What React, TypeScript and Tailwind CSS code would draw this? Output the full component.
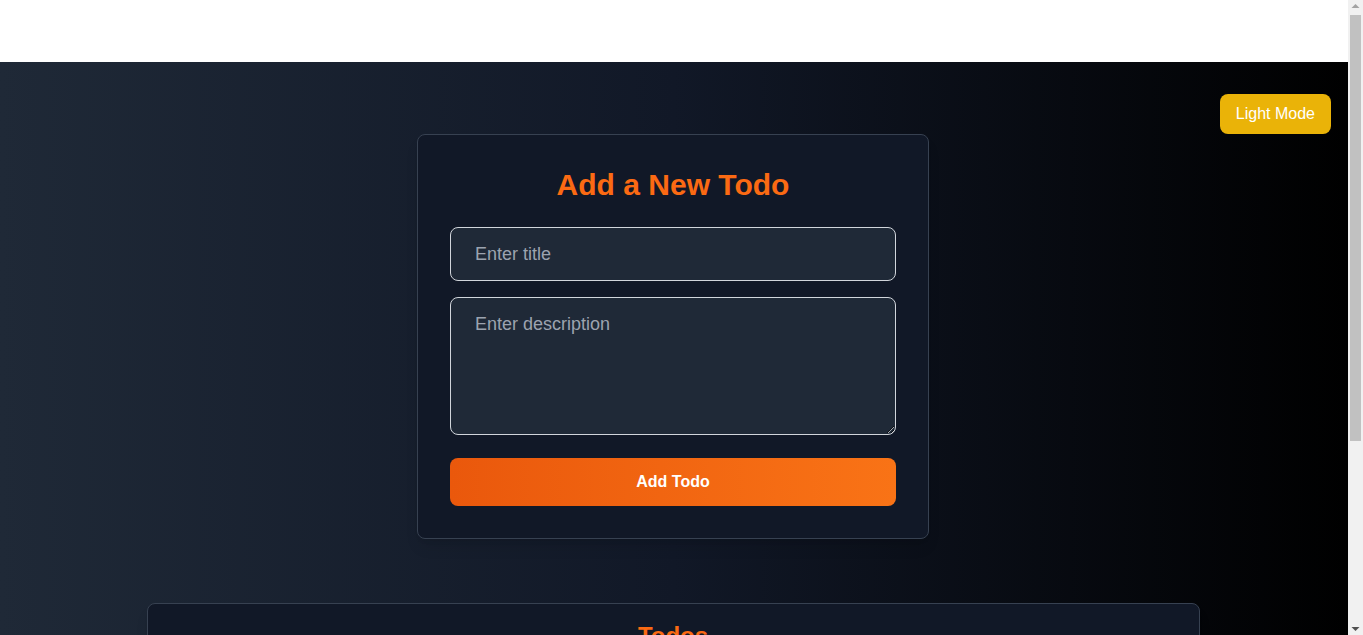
import { useState } from "react";

// fake browser scrollbar, the reference shows the page scrolled at top
const ScrollBar = () => (
    <div className="fixed top-0 right-0 flex h-screen w-[15px] flex-col items-center bg-[#f1f1f1]">
        <svg width="9" height="15" viewBox="0 0 9 15" className="shrink-0">
            <path d="M0.5 8 L4.5 4 L8.5 8 Z" fill="#a3a3a3" />
        </svg>
        <div className="flex-1 w-full px-[2px]">
            <div className="h-[426px] w-full bg-[#c1c1c1]" />
        </div>
        <svg width="9" height="15" viewBox="0 0 9 15" className="shrink-0">
            <path d="M0.5 7 L4.5 11 L8.5 7 Z" fill="#505050" />
        </svg>
    </div>
);

const App = () => {
    const [title, setTitle] = useState("");
    const [description, setDescription] = useState("");

    return (
        <div className="min-h-screen pr-[15px] font-['Liberation_Sans',Arial,sans-serif]">
            <div className="h-[62px] bg-white" />

            <div className="relative min-h-[840px] bg-[linear-gradient(to_right,#1f2937,#111827,#000)] pt-[72px] pb-16">
                <button className="absolute top-8 right-[17px] rounded-lg bg-[#eab308] px-4 py-2 text-base text-white">
                    Light Mode
                </button>

                <div className="pr-[2px]">
                    <div className="mx-auto w-[512px] rounded-lg border border-[#374151] bg-[#111827] p-8 shadow-lg">
                        <h2 className="mb-6 text-center text-3xl font-bold text-[#fb6a13]">
                            Add a New Todo
                        </h2>
                        <form onSubmit={(e) => e.preventDefault()}>
                            <input
                                type="text"
                                value={title}
                                onChange={(e) => setTitle(e.target.value)}
                                placeholder="Enter title"
                                className="mb-4 block w-full rounded-lg border border-[#d1d5db] bg-[#1f2937] px-6 py-3 text-lg text-white placeholder:text-[#9ca3af] outline-none"
                            />
                            <textarea
                                rows={4}
                                value={description}
                                onChange={(e) => setDescription(e.target.value)}
                                placeholder="Enter description"
                                className="mb-[23px] block w-full rounded-lg border border-[#d1d5db] bg-[#1f2937] px-6 py-3 text-lg text-white placeholder:text-[#9ca3af] outline-none"
                            />
                            <button
                                type="submit"
                                className="block w-full rounded-lg bg-gradient-to-r from-[#ea580c] to-[#f97316] py-3 text-base font-bold text-white"
                            >
                                Add Todo
                            </button>
                        </form>
                    </div>

                    <div className="mx-auto mt-16 w-[1053px] rounded-lg border border-[#374151] bg-[#111827] px-8 pt-4 pb-8 shadow-lg">
                        <h2 className="mb-6 text-center text-2xl font-bold text-[#fb6a13]">
                            Todos
                        </h2>
                        <p className="text-center text-[#9ca3af]">No todos yet.</p>
                    </div>
                </div>
            </div>

            <ScrollBar />
        </div>
    );
};

export default App;
